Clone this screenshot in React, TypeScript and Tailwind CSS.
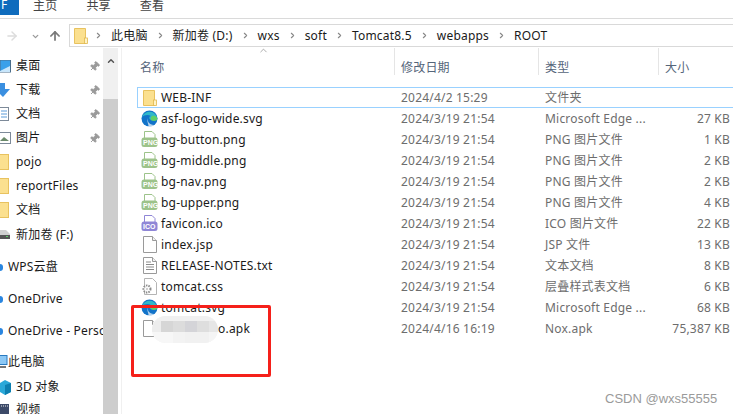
import React from "react";
import { Pin, ArrowUp, ArrowRight, ChevronDown, ChevronRight, ChevronUp } from "lucide-react";

const FolderIcon = () => (
  <svg width="14" height="16" viewBox="0 0 14 16" className="shrink-0">
    <path d="M0.5 0.5H11.5V15.5H0.5Z" fill="#fbe08f" stroke="#e8c25f" />
    <rect x="10.5" y="10" width="3" height="5.5" fill="#fff3c6" stroke="#e0b84f" strokeWidth="0.8" />
  </svg>
);

const EdgeIcon = () => (
  <svg width="17" height="17" viewBox="0 0 17 17" className="shrink-0">
    <circle cx="8.5" cy="8.5" r="8" fill="#1273c9" />
    <path d="M1 7C3 1 13 -1 16 7C16.500 10 13 11 10 10C7.500 9 8 6 10 6C7 4 3 5 1 7Z" fill="#2fb8c9" />
    <path d="M11 6C14 5 16.500 7 16.500 9C16 11 13 11.500 10.500 10.500C9 9.500 9.500 7 11 6Z" fill="#5fd068" />
    <path d="M7 8C6 11 8 15 13 15C11 16.500 9 17 7 16.500C9 16 5 12 7 8Z" fill="#ffffff" opacity="0.7" />
  </svg>
);

const BadgeIcon = ({ label, color }: { label: string; color: string }) => (
  <span className="relative block w-[17px] h-[17px] shrink-0">
    <svg width="17" height="17" viewBox="0 0 17 17" className="block">
      <path d="M3.500 0.500H11L14 3.500V8H3.500Z" fill="#fff" stroke={color} />
      <rect x="0.500" y="6.500" width="16" height="9.500" rx="2.500" fill={color} />
    </svg>
    <span className="absolute left-[2px] top-[7px] text-[7px] leading-[9px] tracking-normal font-bold text-white font-['Liberation_Sans',sans-serif]">
      {label}
    </span>
  </span>
);

const PageIcon = ({ lines }: { lines?: boolean }) => (
  <svg width="14" height="17" viewBox="0 0 14 17" className="shrink-0 ml-[2px]">
    <path d="M0.500 0.500H9.500L13.500 4.500V16.500H0.500Z" fill="#fff" stroke="#9a9a9a" />
    <path d="M9.500 0.500V4.500H13.500" fill="#f1f1f1" stroke="#9a9a9a" />
    {lines && <path d="M3 5H8M3 7.500H11M3 10H11M3 12.500H11" stroke="#8a8a8a" />}
  </svg>
);

const CssIcon = () => (
  <svg width="17" height="17" viewBox="0 0 17 17" className="shrink-0">
    <path d="M3.500 0.500H11.500L15.500 4.500V16.500H3.500Z" fill="#fff" stroke="#b4b4b4" />
    <circle cx="6" cy="11" r="3.500" fill="#fff" stroke="#8c8c8c" strokeWidth="2" strokeDasharray="1.500 1" />
    <circle cx="6" cy="11" r="1.200" fill="#cfcfcf" />
  </svg>
);

const files = [
  { name: "WEB-INF", date: "2024/4/2 15:29", type: "文件夹", size: "", icon: <FolderIcon /> },
  { name: "asf-logo-wide.svg", date: "2024/3/19 21:54", type: "Microsoft Edge ...", size: "27 KB", icon: <EdgeIcon /> },
  { name: "bg-button.png", date: "2024/3/19 21:54", type: "PNG 图片文件", size: "1 KB", icon: <BadgeIcon label="PNG" color="#9dc38a" /> },
  { name: "bg-middle.png", date: "2024/3/19 21:54", type: "PNG 图片文件", size: "2 KB", icon: <BadgeIcon label="PNG" color="#9dc38a" /> },
  { name: "bg-nav.png", date: "2024/3/19 21:54", type: "PNG 图片文件", size: "2 KB", icon: <BadgeIcon label="PNG" color="#9dc38a" /> },
  { name: "bg-upper.png", date: "2024/3/19 21:54", type: "PNG 图片文件", size: "4 KB", icon: <BadgeIcon label="PNG" color="#9dc38a" /> },
  { name: "favicon.ico", date: "2024/3/19 21:54", type: "ICO 图片文件", size: "22 KB", icon: <BadgeIcon label="ICO" color="#8f86d6" /> },
  { name: "index.jsp", date: "2024/3/19 21:54", type: "JSP 文件", size: "13 KB", icon: <PageIcon /> },
  { name: "RELEASE-NOTES.txt", date: "2024/3/19 21:54", type: "文本文档", size: "8 KB", icon: <PageIcon lines /> },
  { name: "tomcat.css", date: "2024/3/19 21:54", type: "层叠样式表文档", size: "6 KB", icon: <CssIcon /> },
  { name: "tomcat.svg", date: "2024/3/19 21:54", type: "Microsoft Edge ...", size: "68 KB", icon: <EdgeIcon /> },
  { name: "o.apk", date: "2024/4/16 16:19", type: "Nox.apk", size: "75,387 KB", icon: <PageIcon /> },
];

const SideIcon = ({ kind }: { kind: string }) => {
  if (kind === "folder")
    return <span className="block w-[9px] h-[16px] bg-[#fbe08f] border border-l-0 border-[#e8c25f]" />;
  if (kind === "cloud")
    return <span className="block w-[3px] h-[7px] rounded-r-full bg-[#2a86e0]" />;
  if (kind === "drive")
    return (
      <svg width="10" height="9" viewBox="0 0 10 9">
        <path d="M0 0H6L10 4V9H0Z" fill="#d0d0d0" />
        <rect y="5" width="10" height="4" fill="#555" />
        <rect x="6" y="6" width="2" height="1" fill="#5fd068" />
      </svg>
    );
  if (kind === "desktop")
    return (
      <svg width="11" height="13" viewBox="0 0 11 13">
        <rect y="0" width="10.500" height="12" fill="#39a0ea" stroke="#4a6d8a" />
        <path d="M0 11L10 6V12H0Z" fill="#c8e6fb" />
      </svg>
    );
  if (kind === "down")
    return (
      <svg width="11" height="14" viewBox="0 0 11 14">
        <path d="M0 0H5V6H10L3 14L0 11Z" fill="#3a8fe0" />
      </svg>
    );
  if (kind === "docs")
    return (
      <svg width="9" height="14" viewBox="0 0 9 14">
        <rect x="-1" y="0.500" width="9.500" height="13" fill="#fff" stroke="#7d8a99" />
        <path d="M1 4H7M1 7H7M1 10H7" stroke="#5a9bd8" />
      </svg>
    );
  if (kind === "pics")
    return (
      <svg width="11" height="12" viewBox="0 0 11 12">
        <rect x="-1" y="0.500" width="11.500" height="11" fill="#fff" stroke="#7d8a99" />
        <path d="M0 9L4 5L9 9Z" fill="#6b8a6a" />
      </svg>
    );
  if (kind === "pc")
    return (
      <svg width="8" height="14" viewBox="0 0 8 14">
        <rect x="-1" y="0.500" width="8" height="9" fill="#8cc8f5" stroke="#2a7ac0" />
        <path d="M0 12H6" stroke="#777" strokeWidth="2" />
      </svg>
    );
  if (kind === "3d")
    return (
      <svg width="11" height="15" viewBox="0 0 11 15">
        <path d="M0 3L5 0L11 3V12L5 15L0 12Z" fill="#2aa8d8" />
        <path d="M5 5L11 3V12L5 15Z" fill="#0d7fb0" />
      </svg>
    );
  return (
    <svg width="9" height="13" viewBox="0 0 9 13">
      <rect width="9" height="13" fill="#3c4a68" />
      <path d="M1 2H8M1 11H8" stroke="#e8e8e8" strokeDasharray="1 1" />
    </svg>
  );
};

// height is each row's slot, the sidebar spacing is not regular
const sideItems = [
  { label: "桌面", kind: "desktop", pin: true, h: "h-[24px]", gap: "w-[16px]" },
  { label: "下载", kind: "down", pin: true, h: "h-[24px]", gap: "w-[16px]" },
  { label: "文档", kind: "docs", pin: true, h: "h-[24px]", gap: "w-[16px]" },
  { label: "图片", kind: "pics", pin: true, h: "h-[24px]", gap: "w-[16px]" },
  { label: "pojo", kind: "folder", h: "h-[24px]", gap: "w-[16px]" },
  { label: "reportFiles", kind: "folder", h: "h-[24px]", gap: "w-[16px]" },
  { label: "文档", kind: "folder", h: "h-[24px]", gap: "w-[16px]" },
  { label: "新加卷 (F:)", kind: "drive", h: "h-[25px]", gap: "w-[16px]" },
  { label: "WPS云盘", kind: "cloud", h: "h-[32px] mt-[4px]", gap: "w-[8px]" },
  { label: "OneDrive", kind: "cloud", h: "h-[32px]", gap: "w-[8px]" },
  { label: "OneDrive - Personal", kind: "cloud", h: "h-[32px]", gap: "w-[8px]" },
  { label: "此电脑", kind: "pc", h: "h-[24px] mt-[3px]", gap: "w-[8px]" },
  { label: "3D 对象", kind: "3d", h: "h-[24px] mt-[1px]", gap: "w-[16px]" },
  { label: "视频", kind: "video", h: "h-[20px] mt-[1px]", gap: "w-[16px]" },
];

const crumbs = ["此电脑", "新加卷 (D:)", "wxs", "soft", "Tomcat8.5", "webapps", "ROOT"];

export default function App() {
  return (
    <div className="w-[733px] h-[414px] overflow-hidden bg-white relative flex flex-col text-[12px] tracking-[0.2px] text-[#1a1a1a] font-['Noto_Sans','Noto_Sans_CJK_SC',sans-serif]">
      {/* ribbon tabs */}
      <div className="h-[19px] shrink-0 flex items-start border-b border-[#dadada]">
        <div className="w-[19px] h-[15px] bg-[#0f6cbd] text-white text-[12px] leading-[9px] pl-[1px] overflow-hidden shrink-0">F</div>
        <div className="flex text-[#444] leading-[12px]">
          <span className="ml-[14px]">主页</span>
          <span className="ml-[29px]">共享</span>
          <span className="ml-[29px]">查看</span>
        </div>
      </div>

      {/* nav + address */}
      <div className="h-[29px] shrink-0 flex items-start">
        <div className="w-[69px] shrink-0 flex items-center h-[29px] pt-[5px]">
          <ArrowRight size={14} strokeWidth={2.500} className="ml-[5px] text-[#dcdcdc]" />
          <ChevronDown size={9} strokeWidth={3.500} className="ml-[12px] text-[#9a9a9a]" />
          <ArrowUp size={14} strokeWidth={3} className="ml-[8px] text-[#7a7a7a]" />
        </div>
        <div className="flex-1 h-[23px] mt-[5px] border border-[#d9d9d9] border-r-0 flex items-center pl-[4px]">
          <FolderIcon />
          <div className="flex items-center ml-[6px]">
            {crumbs.map((crumb) => (
              <React.Fragment key={crumb}>
                <ChevronRight size={9} strokeWidth={3} className="text-[#888] shrink-0" />
                <span className="mx-[8px]">{crumb}</span>
              </React.Fragment>
            ))}
          </div>
        </div>
      </div>

      <div className="flex-1 flex min-h-0">
        {/* sidebar */}
        <div className="w-[103px] shrink-0 pt-[6px] overflow-hidden">
          {sideItems.map((item, i) => (
            <div key={i} className={`flex items-center ${item.h} whitespace-nowrap`}>
              <span className={`${item.gap} shrink-0 flex items-center`}>
                <SideIcon kind={item.kind} />
              </span>
              <span className="flex-1 min-w-0 overflow-hidden">{item.label}</span>
              {item.pin && (
                <Pin size={11} className="text-[#9a9a9a] fill-[#9a9a9a] rotate-45 mr-[3px] shrink-0" />
              )}
            </div>
          ))}
        </div>

        {/* scrollbar */}
        <div className="w-[15px] shrink-0 bg-[#f0f0f0] flex flex-col">
          <div className="h-[51px] shrink-0 pt-[8px] flex justify-center">
            <ChevronUp size={10} strokeWidth={3.500} className="text-[#555]" />
          </div>
          <div className="flex-1 bg-[#cdcdcd]" />
        </div>

        {/* file list */}
        <div className="flex-1 min-w-0 ml-[3px] border-l border-[#f0f0f0] pl-[1px]">
          <div className="h-[39px] flex relative text-[#55657a]">
            <span className="absolute left-[135px] top-[-3px] text-[#888]">
              <ChevronUp size={11} strokeWidth={1.500} />
            </span>
            <div className="w-[271px] shrink-0 pl-[17px] pt-[11px]">名称</div>
            <div className="w-[144px] shrink-0 pl-[6px] pt-[11px] border-l border-[#e5e5e5] h-[27px]">修改日期</div>
            <div className="w-[120px] shrink-0 pl-[6px] pt-[11px] border-l border-[#e5e5e5] h-[27px]">类型</div>
            <div className="flex-1 pl-[6px] pt-[11px] border-l border-[#e5e5e5] h-[27px]">大小</div>
          </div>
          <div>
            {files.map((file, i) => (
              <div
                key={file.name}
                className={`flex items-center h-[21px] whitespace-nowrap ${i === 0 ? "border border-r-0 border-[#99d1ff] ml-[14px]" : "ml-[15px]"}`}
              >
                <span className={`w-[23px] shrink-0 flex justify-start ${i === 0 ? "pl-[5px]" : "pl-[3px]"}`}>
                  {file.icon}
                </span>
                <span className={`w-[240px] shrink-0 text-[#1a1a1a] ${file.name === "o.apk" ? "pl-[57px]" : ""}`}>{file.name}</span>
                <span className="w-[144px] shrink-0 text-[#6d6d6d]">{file.date}</span>
                <span className="w-[120px] shrink-0 text-[#6d6d6d]">{file.type}</span>
                <span className="flex-1 text-right pr-[3px] text-[#6d6d6d]">{file.size}</span>
              </div>
            ))}
          </div>
        </div>
      </div>

      {/* annotations on top of the screenshot */}
      <div className="absolute left-[152px] top-[316px] w-[66px] h-[27px] rounded-[14px] overflow-hidden bg-[#f5f5f5] flex flex-col">
        <div className="h-[5px] bg-[#f0f0f0]" />
        <div className="flex h-[11px]">
          <div className="w-[9px] bg-[#ededed]" />
          <div className="w-[12px] bg-[#d6d6d6]" />
          <div className="w-[12px] bg-[#dcdcdc]" />
          <div className="w-[12px] bg-[#d4d4d8]" />
          <div className="w-[12px] bg-[#dedede]" />
          <div className="flex-1 bg-[#e6e6e6]" />
        </div>
        <div className="flex h-[11px]">
          <div className="w-[21px] bg-[#f7f7f7]" />
          <div className="w-[12px] bg-[#f3f3f3]" />
          <div className="w-[24px] bg-[#f1f1f1]" />
          <div className="flex-1 bg-[#f5f5f5]" />
        </div>
      </div>
      <div className="absolute left-[131px] top-[305px] w-[140px] h-[72px] border-[3px] border-[#f5201a] rounded-[2px]" />
      <div className="absolute left-[605px] top-[391px] text-[13px] leading-[16px] tracking-normal text-[#9a9a9a] font-['Liberation_Sans',sans-serif]">
        CSDN @wxs55555
      </div>
    </div>
  );
}
